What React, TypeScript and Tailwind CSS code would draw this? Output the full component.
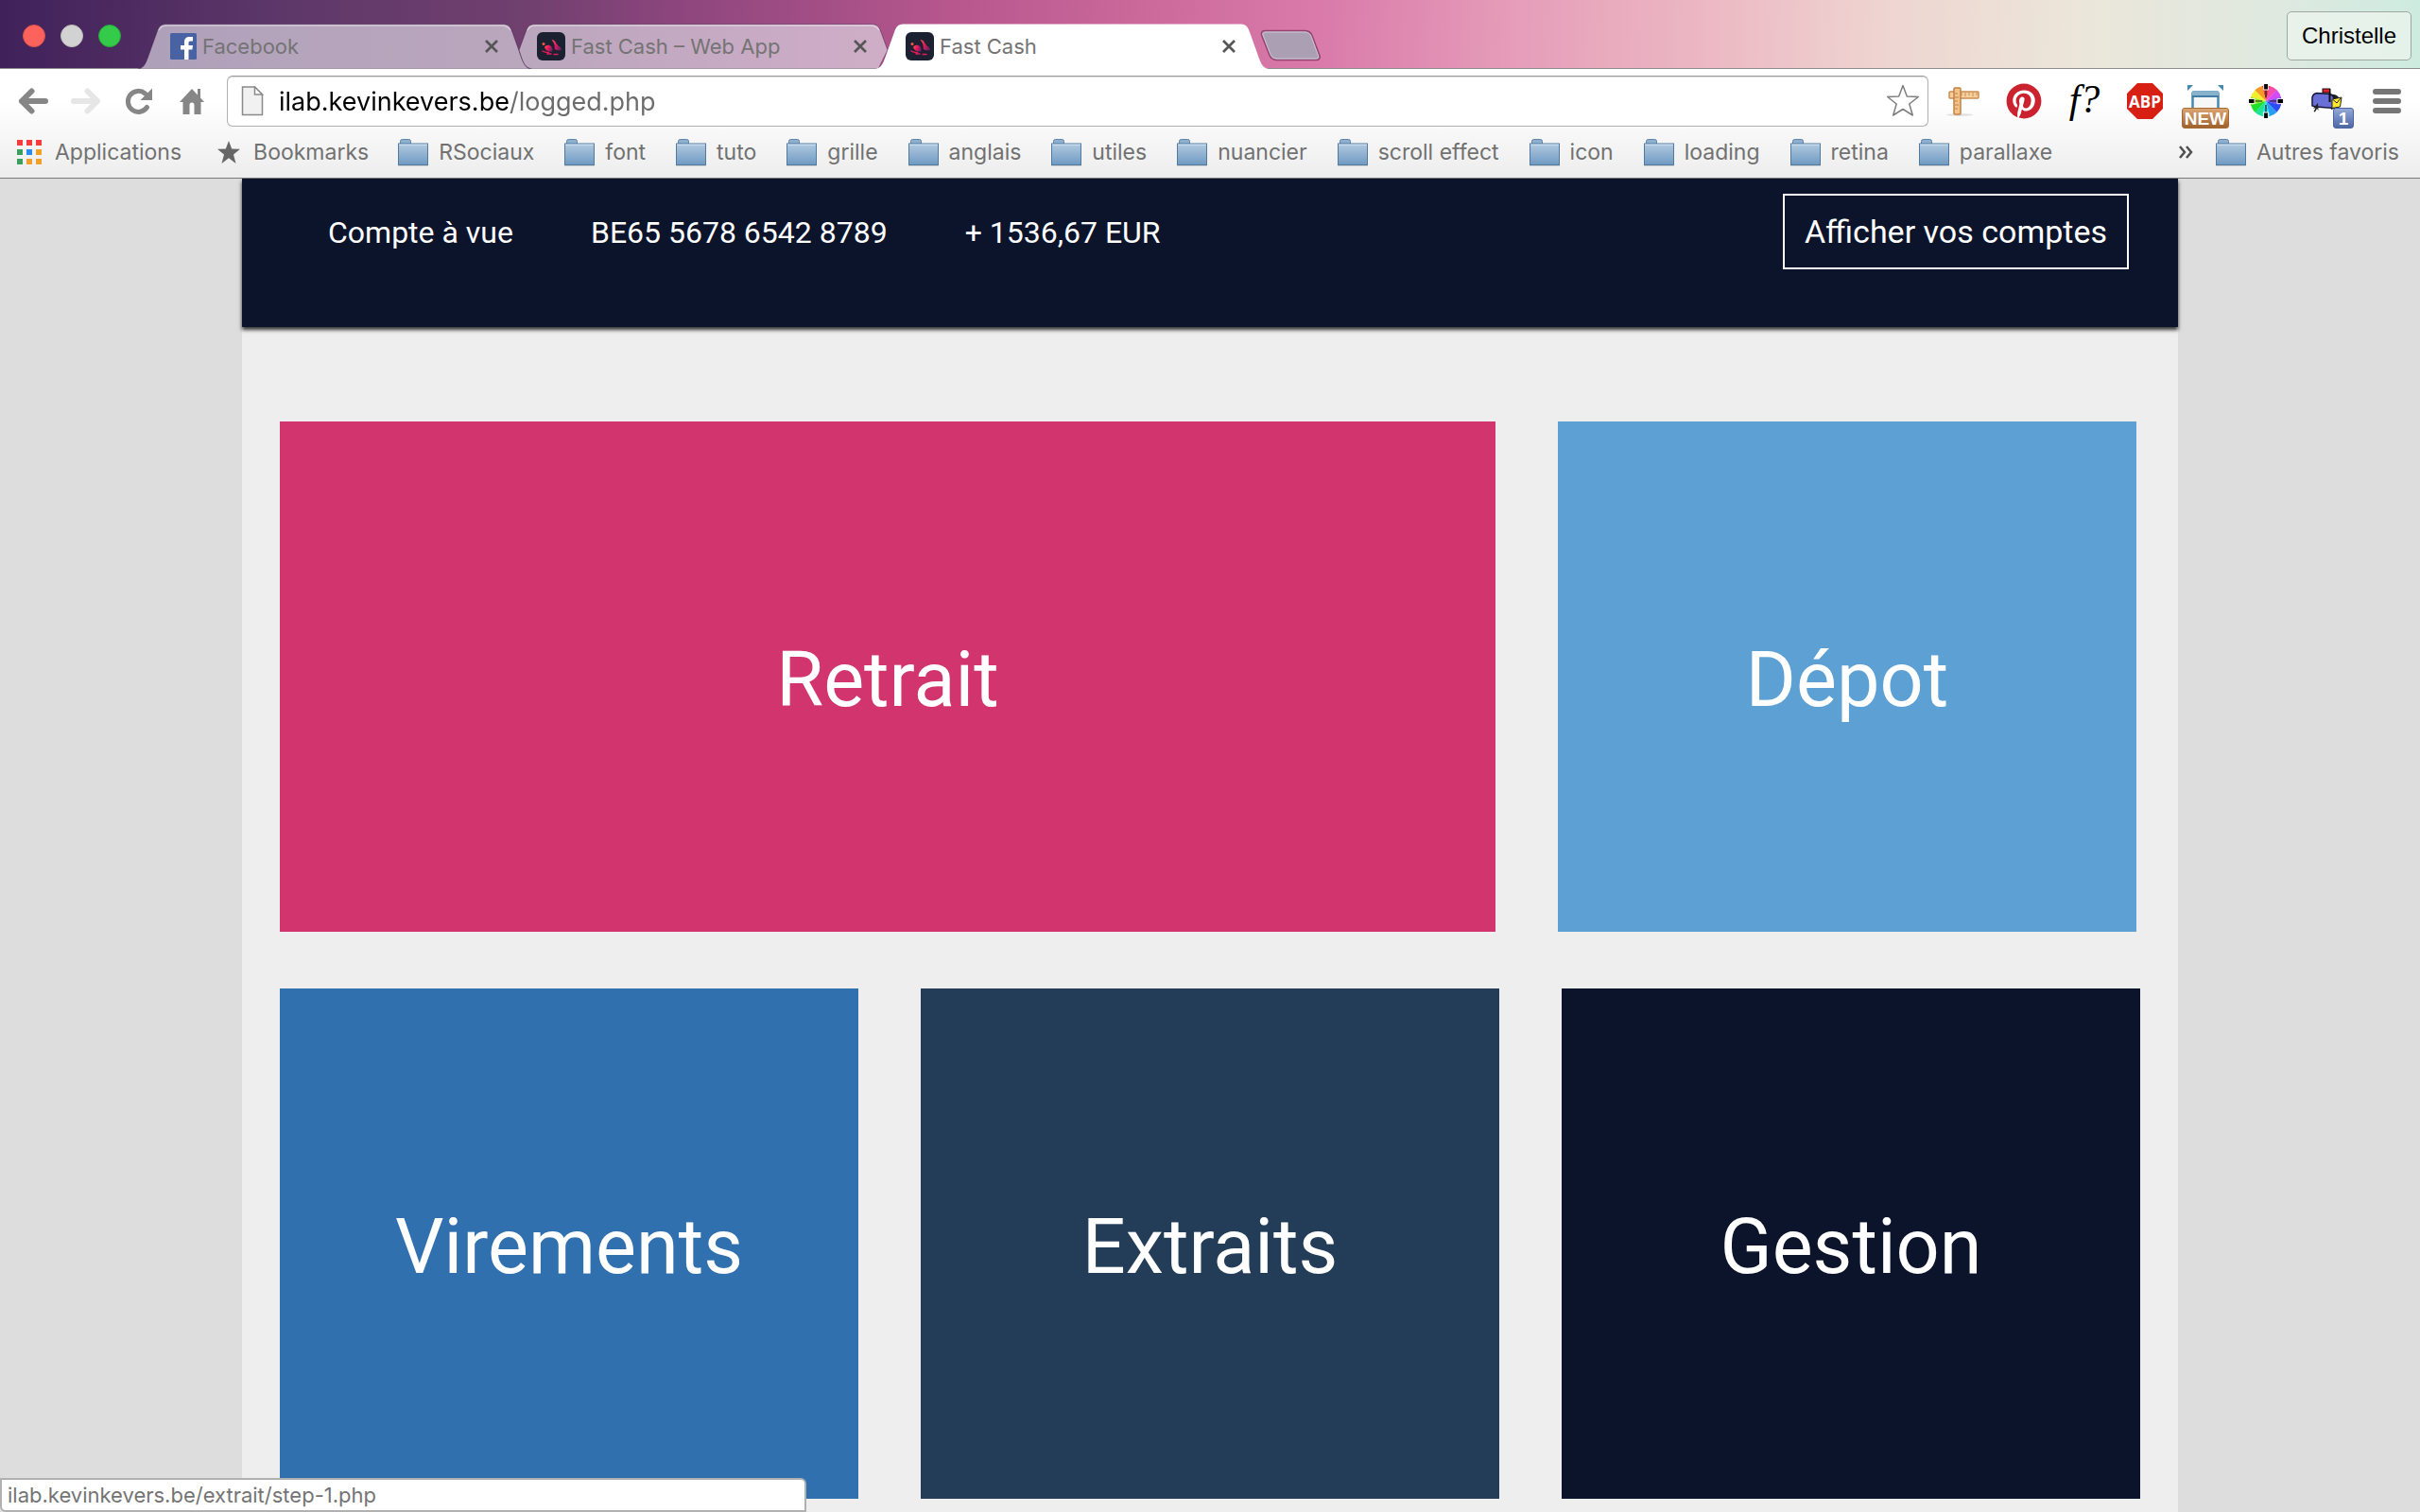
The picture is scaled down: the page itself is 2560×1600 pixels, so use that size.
import React from "react";
import { FaPinterest } from "react-icons/fa";

const FacebookIcon = () => (
  <svg viewBox="0 0 28 28" className="size-7 shrink-0" aria-hidden="true">
    <rect width="28" height="28" rx="1.5" fill="#4862a3" />
    <path d="M15 28V17.5h-4V13h4v-3.2C15 6 17 4 20.5 4H24v4.4h-2.3c-1.7 0-2.2.7-2.2 2.2V13H24l-.6 4.500h-3.900V28z" fill="#fff" />
  </svg>
);

const RabbitIcon = () => (
  <svg viewBox="0 0 30 30" className="size-[30px] shrink-0" aria-hidden="true">
    <defs>
      <linearGradient id="rabbit" x1="0" y1="0" x2="1" y2="0.4">
        <stop offset="0" stopColor="#ff5d4a" />
        <stop offset="0.5" stopColor="#f01a5c" />
        <stop offset="1" stopColor="#7d1f62" />
      </linearGradient>
    </defs>
    <rect width="30" height="30" rx="6" fill="#1c2131" />
    <path d="M15.500 8c2 0 4 1.500 5 4l2.500 3c2.500 1 3 2.500 2.500 4-3 .5-5 .5-6.500-1-.5-3 .5-5-3.500-10z" fill="url(#rabbit)" />
    <path d="M8 16c1.500-3 5.500-3 7.500-.5 1 2 1.500 3.500.5 5-3.500.5-7-1-8-4.500z" fill="url(#rabbit)" />
    <circle cx="7" cy="12.500" r="1.500" fill="#ff5345" />
    <path d="M6 20q3 2 6.500 1.500M11 23h4M18 23.500h4" stroke="#e3195b" strokeWidth="1.500" fill="none" strokeLinecap="round" />
  </svg>
);

const CloseIcon = () => (
  <svg viewBox="0 0 16 16" className="size-4" aria-hidden="true">
    <path d="M2 2l12 12M14 2L2 14" stroke="#565656" strokeWidth="2.700" fill="none" />
  </svg>
);

const FolderIcon = ({ id }: { id: string }) => (
  <svg viewBox="0 0 32 29" className="h-[29px] w-8 shrink-0" aria-hidden="true">
    <defs>
      <linearGradient id={id} x1="0" y1="0" x2="0" y2="1">
        <stop offset="0" stopColor="#b1c9e0" />
        <stop offset="1" stopColor="#6f9ac2" />
      </linearGradient>
    </defs>
    <path d="M2.500 5.500V2.500q0-2 2-2h7q2 0 2 2v3z" fill="#8fafcf" stroke="#5f85a8" />
    <rect x="0" y="27" width="32" height="2" fill="#c9cdd2" />
    <rect x="0.500" y="5" width="31" height="22.500" fill={`url(#${id})`} stroke="#537a9d" />
    <path d="M1 6.200h30" stroke="#d6e4f1" />
  </svg>
);

function Tab({ title, icon, active, first }: { title: string; icon: React.ReactNode; active?: boolean; first?: boolean }) {
  return (
    <div className={`relative flex h-12 w-[416px] items-center pr-[34px] ${first ? "pl-[34px]" : "-ml-[26px] pl-8"} ${active ? "z-10" : ""}`}>
      <svg viewBox="0 0 416 48" preserveAspectRatio="none" className="absolute inset-0 size-full" aria-hidden="true">
        <path
          d={
            first || active
              ? "M0 48C6 47 8 42 10 37L20 9C22 3 24 .5 31 .5H385C392 .5 394 3 396 9L406 37C408 42 410 47 416 48Z"
              : "M27 48C20 47 18 42 16 37L13 28L20 9C22 3 24 .5 31 .5H385C392 .5 394 3 396 9L403 28L393 48Z"
          }
          fill={active ? "#ffffff" : "rgba(225,220,230,0.66)"}
          stroke={active ? "none" : "rgba(70,30,75,0.5)"}
        />
        {!active && <path d="M22 7C24 3 26 2 31 2H385C390 2 392 4 394 7" stroke="rgba(255,255,255,0.4)" fill="none" strokeWidth="1.500" />}
      </svg>
      <button role="tab" aria-selected={!!active} className="relative flex min-w-0 flex-1 items-center gap-[6px] text-left text-[22px] leading-7 text-[#747474]">
        {icon}
        <span className="truncate">{title}</span>
      </button>
      <button aria-label={`Fermer ${title}`} className="relative">
        <CloseIcon />
      </button>
    </div>
  );
}

const folders = ["RSociaux", "font", "tuto", "grille", "anglais", "utiles", "nuancier", "scroll effect", "icon", "loading", "retina", "parallaxe"];

const NavButton = ({ label, children, disabled }: { label: string; children: React.ReactNode; disabled?: boolean }) => (
  <button aria-label={label} disabled={disabled} className="flex h-12 w-14 items-center justify-center">
    {children}
  </button>
);

const ExtButton = ({ label, children }: { label: string; children: React.ReactNode }) => (
  <button aria-label={label} className="relative flex h-12 w-16 items-center justify-center">
    {children}
  </button>
);

const Arrow = ({ color, flip }: { color: string; flip?: boolean }) => (
  <svg viewBox="0 0 32 28" className={`h-7 w-8 ${flip ? "rotate-180" : ""}`} aria-hidden="true">
    <path d="M14.500 3.500L4 14l10.500 10.500M4 14h25" stroke={color} strokeWidth="6" strokeLinecap="round" strokeLinejoin="round" fill="none" />
  </svg>
);

const wheel = ["#f0353b", "#f54db0", "#d24bf5", "#7a49f2", "#2a4df5", "#2a9df5", "#27e0e8", "#20e39a", "#1fe02d", "#8be820", "#f3ee2b", "#f79a25"];

function ColorWheel() {
  return (
    <svg viewBox="0 0 36 36" className="size-9" aria-hidden="true">
      {wheel.map((c, i) => {
        const a = ((i * 30 - 105) * Math.PI) / 180;
        const b = ((i * 30 - 74) * Math.PI) / 180;
        return (
          <path key={c} d={`M18 18L${18 + 16.5 * Math.cos(a)} ${18 + 16.5 * Math.sin(a)}A16.5 16.5 0 0 1 ${18 + 16.5 * Math.cos(b)} ${18 + 16.5 * Math.sin(b)}Z`} fill={c} />
        );
      })}
      <path d="M18 5v9M18 22v9M5 18h9M22 18h9" stroke="#222" strokeWidth="1.200" />
      <path d="M18 2v4.500M18 29.500v4.500M2 18h4.500M29.500 18h4.500" stroke="#fff" strokeWidth="5.500" />
      <path d="M18 0v5.500M18 30.500v5.500M0 18h5.500M30.500 18h5.500" stroke="#000" strokeWidth="3.800" />
    </svg>
  );
}

const Mailbox = () => (
  <svg viewBox="0 0 34 32" className="h-8 w-[34px]" aria-hidden="true">
    <path d="M20 9q9-1 11 5v8l-9 3z" fill="#222" />
    <path d="M2 21V12q1-4 5-4.500l14 1q4 2 4 6v9L6 22z" fill="#6a6fd8" stroke="#15153a" strokeWidth="1.500" />
    <path d="M23 14l10-2-1.500 10-8.500 1.500z" fill="#ffe92e" stroke="#222" />
    <path d="M24 14.500l4 3.500 4-5" stroke="#222" fill="none" />
    <path d="M20.500 3v14" stroke="#111" strokeWidth="2" />
    <rect x="13" y="3" width="7.500" height="4" fill="#e2202c" stroke="#111" />
    <path d="M8 18l-5 5.500 2.500 0-2 3.500 1.500.5 2-3.500 1.500 2z" fill="#222" />
  </svg>
);

const tileClass = "flex h-[540px] items-center justify-center pt-[6px] text-[81px] leading-none text-white";

export default function App() {
  return (
    <div className="relative flex h-screen flex-col overflow-hidden bg-[#dddddd] font-[Inter,sans-serif]">
      <div className="flex h-[73px] shrink-0 items-end border-b border-[#8f8f8f] bg-[linear-gradient(92deg,#40215a_0%,#5e3869_12%,#71406f_22%,#8d467d_28%,#b9588f_40%,#cd6b9c_48%,#da7cab_55%,#e59bb8_62%,#ecbac4_71%,#eed5d1_78%,#ebe6da_86%,#dfe9e0_94%,#cdebe0_100%)]">
        <div className="flex w-36 gap-4 self-stretch pt-[26px] pl-6">
          <button aria-label="Fermer" className="size-6 rounded-full border border-[#d9534d] bg-[#fe625c]" />
          <button aria-label="Réduire" className="size-6 rounded-full border border-[#bdbdbd] bg-[#d2d2d2]" />
          <button aria-label="Agrandir" className="size-6 rounded-full border border-[#27a838] bg-[#34cb4a]" />
        </div>
        <div role="tablist" className="-mb-px ml-[2px] flex">
          <Tab title="Facebook" icon={<FacebookIcon />} first />
          <Tab title="Fast Cash – Web App" icon={<RabbitIcon />} />
          <Tab title="Fast Cash" icon={<RabbitIcon />} active />
        </div>
        <button aria-label="Nouvel onglet" className="mb-[7px] -ml-[10px]">
          <svg viewBox="0 0 66 34" className="h-[34px] w-[66px]" aria-hidden="true">
            <path d="M6 1.500H48q6 0 8 5L64 28q1 4-3 4.500H19q-6 0-8-5L2.500 6q-1-4 3.500-4.500z" fill="#aa9fb3" stroke="#94426f" strokeWidth="1.500" />
            <path d="M6 3H48q5 0 7 4.500L62.500 28q.5 3-2 3H19q-5 0-7-4.500L4 6q-.5-2.500 2-3z" fill="none" stroke="#cfc3d3" />
          </svg>
        </button>
        <button className="mr-[9px] mb-2 ml-auto h-[52px] self-end rounded-[5px] border border-[#9fa7a2] bg-[#eef5ee]/70 px-[15px] font-['Liberation_Sans',sans-serif] text-2xl text-black">Christelle</button>
      </div>

      <div className="shrink-0 border-b border-[#7b7b7b] bg-linear-to-b from-white from-30% to-[#ededed]">
        <div className="flex h-[61px] items-end pr-[3px] pl-[7px]">
          <nav aria-label="Navigation" className="mb-[3px] flex">
            <NavButton label="Page précédente"><Arrow color="#868686" /></NavButton>
            <NavButton label="Page suivante" disabled><Arrow color="#e6e6e6" flip /></NavButton>
            <NavButton label="Actualiser">
              <svg viewBox="0 0 28 28" className="size-7" aria-hidden="true">
                <path d="M22.500 20.500A11 11 0 1 1 20.500 6" stroke="#868686" strokeWidth="5" fill="none" strokeLinecap="round" />
                <path d="M28 .5V13H15.500z" fill="#868686" />
              </svg>
            </NavButton>
            <NavButton label="Accueil">
              <svg viewBox="0 0 26 28" className="h-7 w-[26px]" aria-hidden="true">
                <path d="M13 1l6 6.500V1h3v9.500L26 15h-3.500v13H15.500V18a2.500 2.500 0 0 0-5 0v10H3.500V15H0z" fill="#868686" />
              </svg>
            </NavButton>
          </nav>
          <div className="ml-[9px] flex h-[54px] flex-1 items-center rounded-md border border-[#b0b0b0] border-t-[#999] bg-white pr-[6px] pl-[14px] shadow-[inset_0_1px_1px_#ddd]">
            <svg viewBox="0 0 24 32" className="h-8 w-6" aria-hidden="true">
              <path d="M1.500 1h13l8 8v21.500h-21z" fill="#f1f1f1" stroke="#8a8a8a" strokeWidth="1.500" />
              <path d="M14.500 1v8h8z" fill="#fff" stroke="#8a8a8a" strokeWidth="1.500" />
            </svg>
            <input
              aria-label="Adresse"
              defaultValue="ilab.kevinkevers.be/logged.php"
              className="ml-4 h-10 flex-1 bg-[linear-gradient(90deg,#000_245px,#6c6c6c_245px)] bg-clip-text pt-[2px] text-[27px] text-black outline-none [-webkit-text-fill-color:transparent]"
            />
            <button aria-label="Ajouter aux favoris">
              <svg viewBox="0 0 40 40" className="size-10" aria-hidden="true">
                <path d="M20 3.500l4.300 11.500 12 .5-9.500 7.500 3.500 12L20 28.500 9.700 35l3.500-12L3.700 15.500l12-.5z" fill="#fff" stroke="#7e7e7e" strokeWidth="1.500" strokeLinejoin="round" />
              </svg>
            </button>
          </div>
          <div className="mb-[3px] ml-[5px] flex">
            <ExtButton label="Règle">
              <svg viewBox="0 0 36 34" className="h-[34px] w-9" aria-hidden="true">
                <ellipse cx="14" cy="31.500" rx="14" ry="1.500" fill="#e2e2e2" />
                <rect x="3" y="7" width="31" height="7" rx="1" fill="#f6cf9d" stroke="#c98e53" strokeWidth="1.500" />
                <path d="M16 8v3M20 8v4M24 8v3M28 8v4M32 8v3" stroke="#c98e53" />
                <rect x="8" y="3" width="7" height="28" rx="1" fill="#f3c38a" stroke="#c08347" strokeWidth="1.500" />
                <path d="M9 9h3M9 13h4M9 17h3M9 21h4M9 25h3" stroke="#c08347" />
              </svg>
            </ExtButton>
            <ExtButton label="Pinterest"><FaPinterest className="size-[38px] text-[#cb2230]" /></ExtButton>
            <ExtButton label="WhatFont"><span className="pb-1 font-['Liberation_Serif',serif] text-[42px] leading-none text-black italic">f?</span></ExtButton>
            <ExtButton label="Adblock Plus">
              <span className="flex size-[38px] items-center justify-center bg-[#d81f13] font-['Open_Sans',sans-serif] text-[17px] leading-none font-bold text-white [clip-path:polygon(29%_0,71%_0,100%_29%,100%_71%,71%_100%,29%_100%,0_71%,0_29%)]">ABP</span>
            </ExtButton>
            <ExtButton label="Window Resizer">
              <svg viewBox="0 0 38 38" className="size-[38px]" aria-hidden="true">
                <path d="M0 2h6L0 8zM38 2h-6l6 6z" fill="#4689b0" />
                <path d="M5.500 30V11q0-1.500 1.500-1.500h24q1.500 0 1.500 1.500v19" fill="#f7f7f7" stroke="#4689b0" strokeWidth="2.500" />
                <rect x="5" y="8.500" width="28" height="4.500" fill="#8ab2cc" />
                <path d="M5 14h28" stroke="#3f7fa6" strokeWidth="2" />
              </svg>
              <span className="absolute top-[31px] left-[7px] flex h-[22px] w-[50px] items-center justify-center rounded-[3px] border border-[#a56a34] bg-linear-to-b from-[#dba574] to-[#a0622c] font-['Liberation_Sans',sans-serif] text-[19px] leading-none font-bold text-white">NEW</span>
            </ExtButton>
            <ExtButton label="Couleurs"><ColorWheel /></ExtButton>
            <ExtButton label="Messagerie">
              <Mailbox />
              <span className="absolute top-[31px] left-[39px] flex size-[22px] items-center justify-center rounded-[3px] border border-[#4c65a0] bg-linear-to-b from-[#93a9d8] to-[#4f68a6] font-['Liberation_Sans',sans-serif] text-[19px] leading-none font-bold text-white">1</span>
            </ExtButton>
            <ExtButton label="Menu">
              <svg viewBox="0 0 30 26" className="h-[26px] w-[30px]" aria-hidden="true">
                <path d="M3 3h24M3 13h24M3 23h24" stroke="#767676" strokeWidth="6" strokeLinecap="round" />
              </svg>
            </ExtButton>
          </div>
        </div>

        <div className="flex h-[54px] items-center pr-[22px] pl-[18px] text-[23px] leading-7 whitespace-nowrap text-[#717171]">
          <button className="mr-[38px] flex items-center gap-[14px]">
            <svg viewBox="0 0 26 26" className="size-[26px]" aria-hidden="true">
              <path d="M0 0h6v6H0zM10 0h6v6h-6zM20 0h6v6h-6z" fill="#f63c3c" />
              <path d="M0 10h6v6H0zM0 20h6v6H0z" fill="#3c9f5f" />
              <path d="M10 10h6v6h-6z" fill="#2b8cf0" />
              <path d="M20 10h6v6h-6zM10 20h6v6h-6zM20 20h6v6h-6z" fill="#f0a12b" />
            </svg>
            Applications
          </button>
          <button className="mr-[31px] flex items-center gap-[14px]">
            <svg viewBox="0 0 24 24" className="size-6" aria-hidden="true">
              <path d="M12 0l3.200 8.600 8.800.2-7 5.600L19.500 24 12 18.300 4.500 24 7 14.400 0 8.800l8.800-.2z" fill="#666" />
            </svg>
            Bookmarks
          </button>
          <div className="flex gap-8">
            {folders.map((name, i) => (
              <button key={name} className="flex items-center gap-[11px]">
                <FolderIcon id={`folder-${i}`} />
                {name}
              </button>
            ))}
          </div>
          <button aria-label="Autres éléments" className="mr-6 ml-auto">
            <svg viewBox="0 0 15 14" className="h-[14px] w-[15px]" aria-hidden="true">
              <path d="M1 1l5 6-5 6M8 1l5 6-5 6" stroke="#505050" strokeWidth="2.500" fill="none" />
            </svg>
          </button>
          <button className="flex items-center gap-[11px]">
            <FolderIcon id="folder-other" />
            Autres favoris
          </button>
        </div>
      </div>

      <main className="mx-auto w-4/5 flex-1 bg-[#eeeeee] font-[Roboto,sans-serif]">
        <header className="flex h-[157px] items-start justify-between bg-[#0c142b] pt-4 pr-[52px] pl-[91px] text-[32px] leading-[82px] text-white shadow-[0_3px_4px_rgba(0,0,0,0.8)]">
          <div className="flex gap-[82px]">
            <span>Compte à vue</span>
            <span>BE65 5678 6542 8789</span>
            <span>+ 1536,67 EUR</span>
          </div>
          <button className="h-20 border-2 border-white px-[21px] text-[34px] leading-none">Afficher vos comptes</button>
        </header>
        <div className="grid gap-y-[60px] pt-[100px]">
          <div className="grid grid-cols-[1286fr_612fr] gap-x-[66px] pr-11 pl-10">
            <a href="#retrait" className={`${tileClass} bg-[#d2346e]`}>Retrait</a>
            <a href="#depot" className={`${tileClass} bg-[#5da0d3]`}>Dépot</a>
          </div>
          <div className="grid grid-cols-3 gap-x-[66px] px-10">
            <a href="#virements" className={`${tileClass} bg-[#3070af]`}>Virements</a>
            <a href="#extraits" className={`${tileClass} bg-[#233d58]`}>Extraits</a>
            <a href="#gestion" className={`${tileClass} bg-[#0c142b]`}>Gestion</a>
          </div>
        </div>
      </main>

      <div role="status" className="absolute bottom-0 left-0 flex h-9 w-1/3 items-center rounded-tr-md rounded-bl-md border-2 border-[#b1b1b1] bg-white pl-[6px] text-[22px] leading-7 text-[#747474]">
        ilab.kevinkevers.be/extrait/step-1.php
      </div>
    </div>
  );
}
